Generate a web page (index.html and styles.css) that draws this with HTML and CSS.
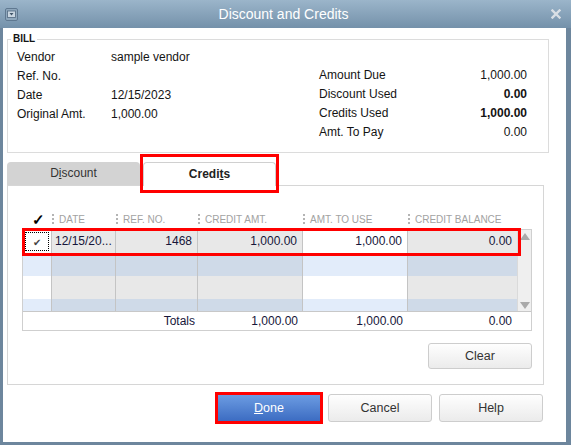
FILE: index.html
```html
<!DOCTYPE html>
<html lang="en">
<head>
    <meta charset="UTF-8">
    <title>Discount and Credits</title>
    <link rel="stylesheet" href="styles.css">
</head>
<body>
    <div class="window">
        <div class="titlebar">
            <svg class="sysicon" width="13" height="13" viewBox="0 0 13 13">
                <rect x="0.5" y="0.5" width="12" height="12" rx="1.5" fill="#8ea7bc" stroke="#5f7890"/>
                <rect x="2.5" y="3" width="8" height="6.5" fill="#c9d6e1" stroke="#52697f" stroke-width="0.8"/>
                <path d="M4.5 5 L8.5 5 L6.5 7.5 Z" fill="#3f5468"/>
            </svg>
            <span class="title">Discount and Credits</span>
            <svg class="close" width="10" height="10" viewBox="0 0 10 10">
                <path d="M1.5 1.5 L8.5 8.5 M8.5 1.5 L1.5 8.5" stroke="#d9dfe5" stroke-width="2.4" stroke-linecap="square"/>
            </svg>
        </div>

        <div class="content">
            <fieldset class="bill">
                <legend>BILL</legend>
                <div class="bill-cols">
                    <div class="info">
                        <div class="info-row"><span class="lbl">Vendor</span><span>sample vendor</span></div>
                        <div class="info-row"><span class="lbl">Ref. No.</span><span></span></div>
                        <div class="info-row"><span class="lbl">Date</span><span>12/15/2023</span></div>
                        <div class="info-row"><span class="lbl">Original Amt.</span><span>1,000.00</span></div>
                    </div>
                    <div class="info totals-info">
                        <div class="info-row"><span>Amount Due</span><span class="num">1,000.00</span></div>
                        <div class="info-row"><span>Discount Used</span><span class="num strong">0.00</span></div>
                        <div class="info-row"><span>Credits Used</span><span class="num strong">1,000.00</span></div>
                        <div class="info-row"><span>Amt. To Pay</span><span class="num">0.00</span></div>
                    </div>
                </div>
            </fieldset>

            <div class="tabs">
                <div class="tab">D<u>i</u>scount</div>
                <div class="tab active">Credi<u>t</u>s</div>
            </div>

            <div class="panel">
                <div class="cols head">
                    <div class="hcell check-head">&#10003;</div>
                    <div class="hcell">DATE</div>
                    <div class="hcell">REF. NO.</div>
                    <div class="hcell">CREDIT AMT.</div>
                    <div class="hcell">AMT. TO USE</div>
                    <div class="hcell">CREDIT BALANCE</div>
                </div>

                <div class="table">
                    <div class="body">
                        <div class="rows">
                            <div class="cols row sel">
                                <div class="cell chk"><span class="focus">&#10004;</span></div>
                                <div class="cell">12/15/20...</div>
                                <div class="cell num">1468</div>
                                <div class="cell num">1,000.00</div>
                                <div class="cell num edit">1,000.00</div>
                                <div class="cell num">0.00</div>
                            </div>
                            <div class="cols row alt">
                                <div class="cell light"></div><div class="cell"></div><div class="cell"></div>
                                <div class="cell"></div><div class="cell light"></div><div class="cell"></div>
                            </div>
                            <div class="cols row">
                                <div class="cell light"></div><div class="cell"></div><div class="cell"></div>
                                <div class="cell"></div><div class="cell light"></div><div class="cell"></div>
                            </div>
                            <div class="cols row alt short">
                                <div class="cell light"></div><div class="cell"></div><div class="cell"></div>
                                <div class="cell"></div><div class="cell light"></div><div class="cell"></div>
                            </div>
                        </div>
                        <div class="scrollbar">
                            <span class="arrow up"></span>
                            <span class="arrow down"></span>
                        </div>
                    </div>
                    <div class="cols totals">
                        <div class="tcell"></div>
                        <div class="tcell label">Totals</div>
                        <div class="tcell num">1,000.00</div>
                        <div class="tcell num">1,000.00</div>
                        <div class="tcell num">0.00</div>
                    </div>
                </div>

                <div class="clear-row">
                    <button class="btn">Clear</button>
                </div>
            </div>

            <div class="actions">
                <button class="btn primary"><u>D</u>one</button>
                <button class="btn">Cancel</button>
                <button class="btn">Help</button>
            </div>
        </div>
    </div>
</body>
</html>
```

FILE: styles.css
```css
:root {
    --frame: #6d869d;
    --red: #ff0000;
    --grid-line: #c4c4c4;
    --cell-gray: #e8e8e8;
    --cell-blue: #cfdae8;
    --cell-lightblue: #e2ecfa;
    --text: #141414;
    --grid-text: #16163a;
}
* { box-sizing: border-box; }
body {
    margin: 0;
    font-family: "Liberation Sans", Arial, sans-serif;
    font-size: 12px;
    color: var(--text);
}
.window {
    width: 571px;
    height: 445px;
    background: var(--frame);
    padding-bottom: 3px;
}
.titlebar {
    height: 28px;
    background: linear-gradient(#9bb5ca, #7491aa);
    display: grid;
    grid-template-columns: 30px 1fr 30px;
    align-items: center;
}
.sysicon { margin-left: 5px; margin-top: 1px; }
.title {
    text-align: center;
    color: #fff;
    font-size: 14px;
    margin-left: -4px;
}
.close { justify-self: end; margin-right: 10px; }

.content {
    background: #fff;
    margin: 0 5px 0 3px;
    height: 414px;
    overflow: hidden;
    padding-top: 5px;
}

/* bill box */
.bill {
    margin: 0 0 0 4px;
    width: 542px;
    border: 1px solid #dcdcdc;
    padding: 3px 21px 10px 9px;
}
.bill legend {
    font-size: 10px;
    font-weight: bold;
    line-height: 12px;
    padding: 0 2px;
    margin-left: -6px;
}
.bill-cols { display: flex; justify-content: space-between; }
.info-row {
    display: flex;
    height: 19px;
    line-height: 19px;
}
.info .lbl { width: 94px; }
.totals-info { width: 208px; margin-top: 18px; }
.totals-info .info-row { justify-content: space-between; }
.strong { font-weight: bold; }

/* tabs */
.tabs {
    display: flex;
    align-items: flex-start;
    margin: 9px 0 0 4px;
    height: 23px;
}
.tab {
    width: 133px;
    height: 23px;
    line-height: 23px;
    text-align: center;
    background: #d3d3d3;
    border-radius: 4px 4px 0 0;
    color: #333;
}
.tab.active {
    position: relative;
    z-index: 1;
    margin-left: 3px;
    height: 24px;
    background: #fff;
    border: 1px solid #d0d0d0;
    border-bottom: none;
    font-weight: bold;
    color: #222;
}
.tab.active::after {
    content: "";
    position: absolute;
    left: -4px;
    right: -4px;
    top: -9px;
    bottom: -7px;
    border: 3px solid var(--red);
}

/* panel */
.panel {
    margin-left: 4px;
    width: 537px;
    height: 200px;
    border: 1px solid #d6d6d6;
    padding: 25px 0 0 14px;
}
.cols {
    display: grid;
    grid-template-columns: 29px 64px 82px 105px 105px 109px;
}
.head { margin-left: 1px; height: 18px; }
.hcell {
    position: relative;
    font-size: 10px;
    color: #a2a2a2;
    line-height: 17px;
    padding-left: 7px;
    white-space: nowrap;
}
.hcell::before {
    content: "";
    position: absolute;
    left: 0;
    top: 3px;
    height: 10px;
    border-left: 2px dotted #b4b4b4;
}
.hcell.check-head {
    color: #000;
    font-size: 15px;
    font-weight: bold;
    padding-left: 9px;
    line-height: 18px;
}
.hcell.check-head::before { display: none; }

.table {
    width: 510px;
    border: 1px solid #cfcfcf;
}
.body { display: flex; }
.rows { width: 494px; }
.row { height: 22px; }
.row .cell {
    background: var(--cell-gray);
    border-right: 1px solid var(--grid-line);
}
.row .cell.light { background: #fff; }
.row.alt .cell { background: var(--cell-blue); }
.row.alt .cell.light { background: var(--cell-lightblue); }
.row.short { height: 12px; }
.row:nth-child(3) { height: 23px; }
.row .cell:last-child { border-right: none; }

.row.sel {
    position: relative;
    height: 24px;
    border-bottom: 1px solid #8c8c8c;
}
.row.sel::after {
    content: "";
    position: absolute;
    left: -1px;
    right: -4px;
    top: -2px;
    bottom: -3px;
    border: 3px solid var(--red);
}
.row.sel .cell {
    line-height: 23px;
    color: var(--grid-text);
    padding: 0 5px 0 3px;
    white-space: nowrap;
}
.row.sel .cell.chk { background: #fff; padding: 2px; }
.row.sel .cell.edit { background: #fff; }
.focus {
    display: block;
    height: 19px;
    border: 1px dotted #000;
    text-align: center;
    line-height: 19px;
    font-size: 10px;
    color: #444;
}
.num { text-align: right; }

.scrollbar {
    width: 14px;
    background: #efefef;
    border-left: 1px solid #dadada;
    display: flex;
    flex-direction: column;
    justify-content: space-between;
    padding: 3px 0 2px;
}
.arrow {
    align-self: center;
    width: 0;
    height: 0;
    border-left: 5px solid transparent;
    border-right: 5px solid transparent;
}
.arrow.up { border-bottom: 7px solid #a9a9a9; }
.arrow.down { border-top: 7px solid #a9a9a9; }

.totals {
    grid-template-columns: 29px 146px 105px 105px 109px;
    height: 19px;
    border-top: 1px solid #c8c8c8;
    line-height: 18px;
    color: var(--grid-text);
}
.tcell { padding-right: 5px; text-align: right; }
.tcell.label { padding-right: 3px; }

.clear-row {
    display: flex;
    justify-content: flex-end;
    padding-right: 11px;
    margin-top: 12px;
}

/* buttons */
.btn {
    font-family: "Liberation Sans", Arial, sans-serif;
    font-size: 12.5px;
    color: #333;
    width: 104px;
    height: 26px;
    background: linear-gradient(#fefefe, #ebebeb);
    border: 1px solid #cdcdcd;
    border-radius: 3px;
    padding: 0;
}
.actions {
    display: flex;
    justify-content: flex-end;
    gap: 7px;
    padding-right: 23px;
    margin-top: 9px;
}
.actions .btn { height: 28px; width: 104px; }
.btn.primary {
    position: relative;
    color: #fff;
    border-radius: 1px;
    background: linear-gradient(#6c9ce2, #3c6cc2);
    border: 1px solid #3463ae;
}
.btn.primary::after {
    content: "";
    position: absolute;
    left: -3px;
    right: -3px;
    top: -3px;
    bottom: -3px;
    border: 3px solid var(--red);
}
```
